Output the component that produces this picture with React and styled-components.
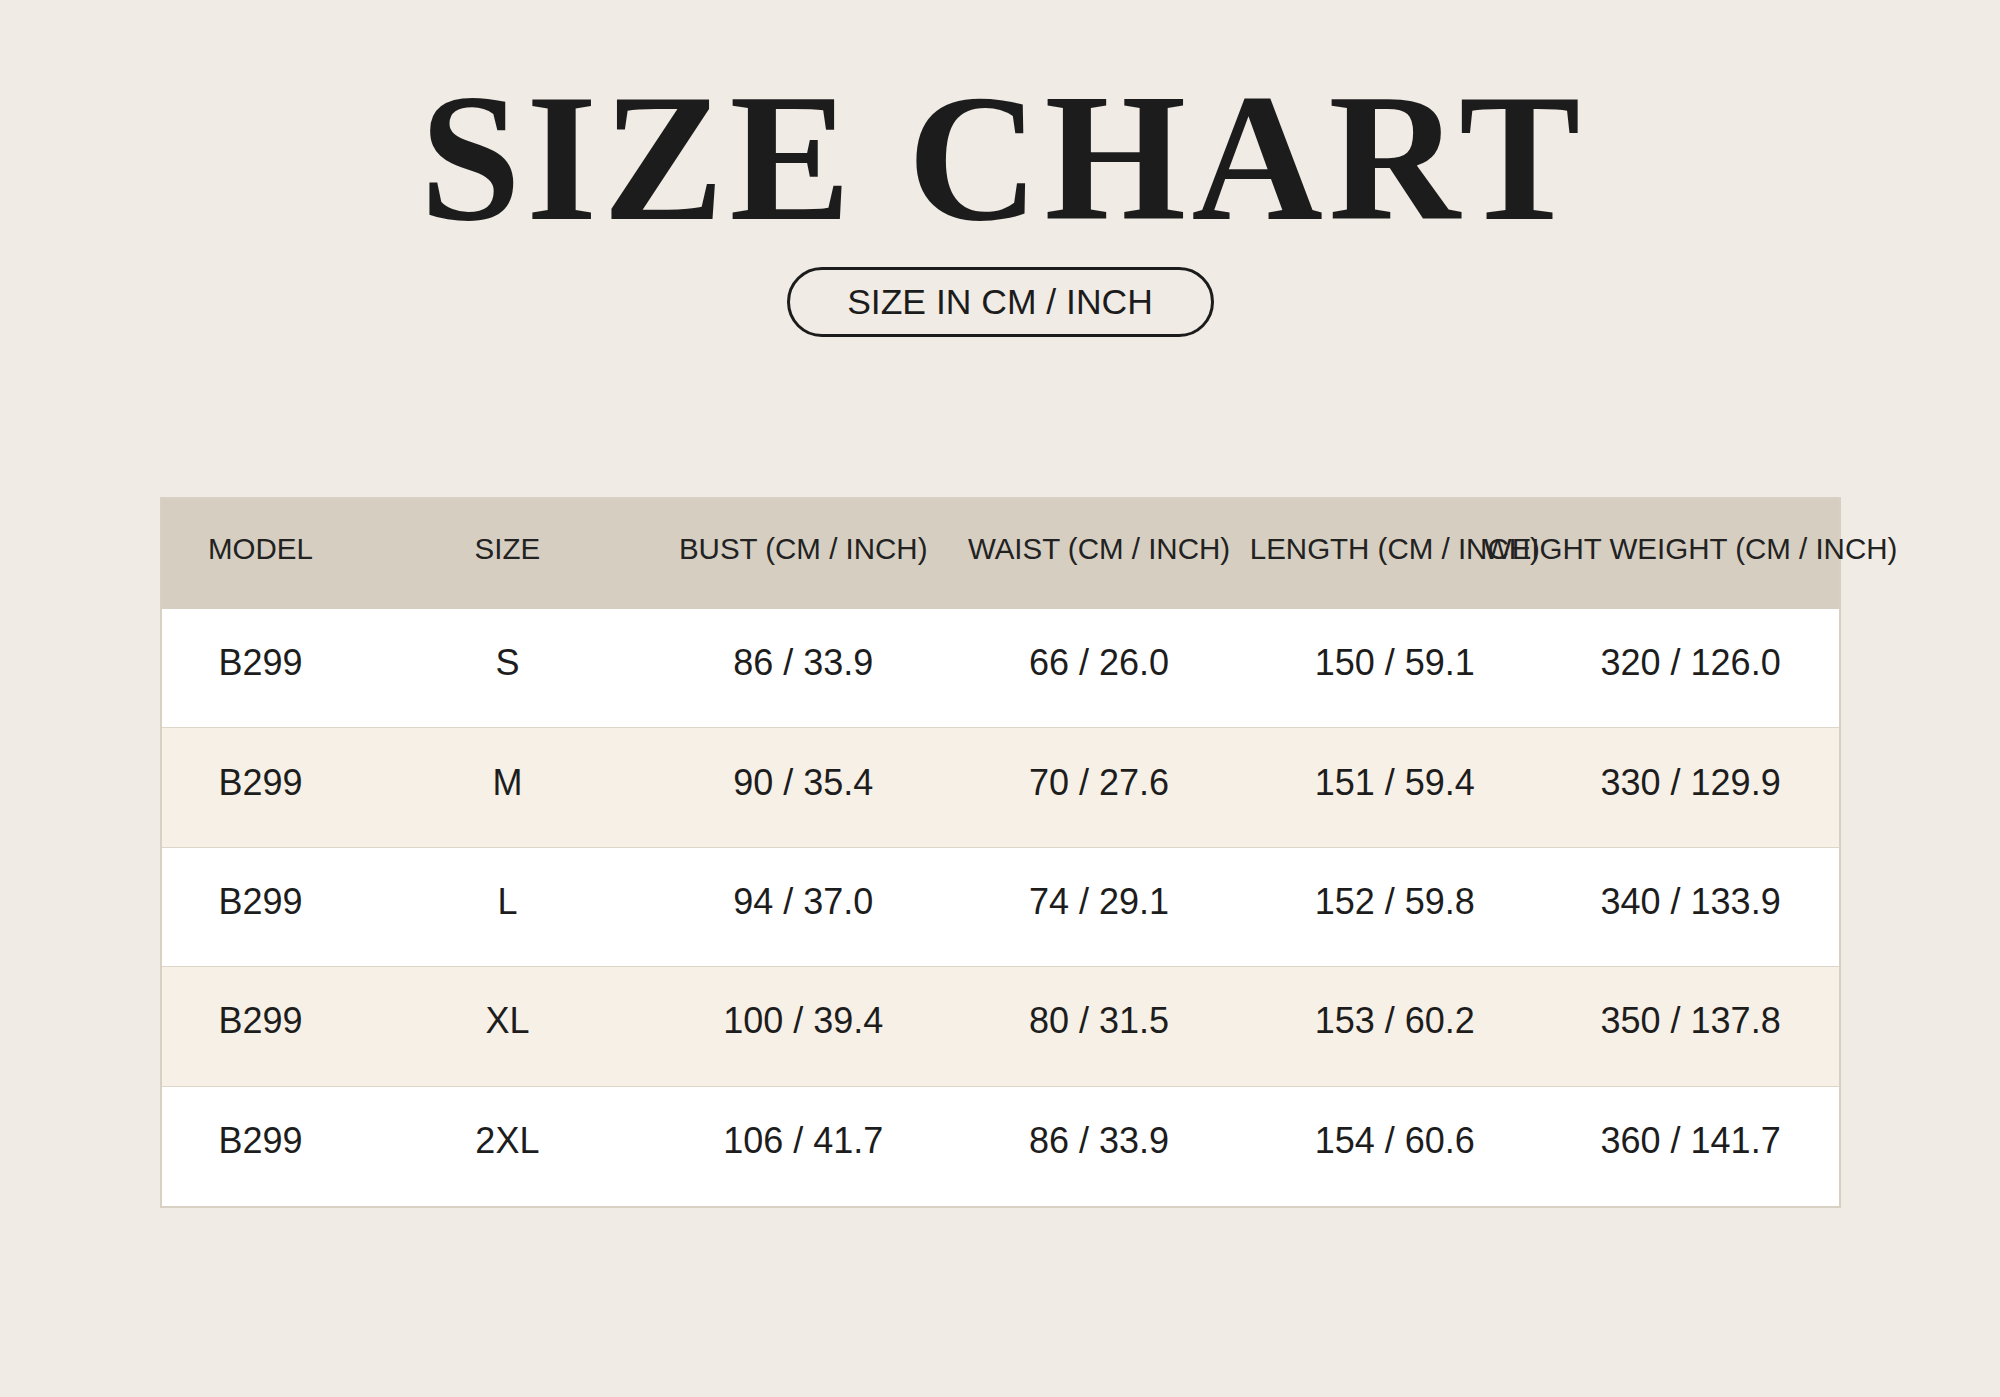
import React from 'react';
import styled, { createGlobalStyle } from 'styled-components';

const GlobalStyle = createGlobalStyle`
  html, body {
    margin: 0;
    padding: 0;
    background: #f0ebe4;
  }
  body {
    font-family: 'Liberation Sans', Arial, sans-serif;
    color: #1d1d1d;
  }
`;

const columns = [
  'MODEL',
  'SIZE',
  'BUST (CM / INCH)',
  'WAIST (CM / INCH)',
  'LENGTH (CM / INCH)',
  'WEIGHT WEIGHT (CM / INCH)',
];

const rows = [
  ['B299', 'S', '86 / 33.9', '66 / 26.0', '150 / 59.1', '320 / 126.0'],
  ['B299', 'M', '90 / 35.4', '70 / 27.6', '151 / 59.4', '330 / 129.9'],
  ['B299', 'L', '94 / 37.0', '74 / 29.1', '152 / 59.8', '340 / 133.9'],
  ['B299', 'XL', '100 / 39.4', '80 / 31.5', '153 / 60.2', '350 / 137.8'],
  ['B299', '2XL', '106 / 41.7', '86 / 33.9', '154 / 60.6', '360 / 141.7'],
];

const App = () => {
  return (
    <Page>
      <GlobalStyle />
      <Title>SIZE CHART</Title>
      <UnitPill>SIZE IN CM / INCH</UnitPill>
      <Table>
        <HeaderRow>
          {columns.map((c) => (
            <HeadCell key={c}>{c}</HeadCell>
          ))}
        </HeaderRow>
        {rows.map((r, i) => (
          <Row key={r[1]} $alt={i % 2 === 1} $last={i === rows.length - 1}>
            {r.map((v, j) => (
              <Cell key={j}>{v}</Cell>
            ))}
          </Row>
        ))}
      </Table>
    </Page>
  );
};

export default App;

// Styled Components

const Page = styled.div`
  width: 2000px;
  min-height: 1397px;
  box-sizing: border-box;
  padding-top: 58px;
  display: flex;
  flex-direction: column;
  align-items: center;
  background: #f0ebe4;
`;

const Title = styled.h1`
  margin: 0;
  font-family: 'Liberation Serif', 'Times New Roman', serif;
  font-weight: 700;
  font-size: 182px;
  line-height: 199px;
  height: 199px;
  letter-spacing: 5.5px;
  padding-left: 5.5px;
  color: #1c1c1c;
  white-space: nowrap;
`;

const UnitPill = styled.div`
  margin-top: 10px;
  width: 427px;
  height: 70px;
  box-sizing: border-box;
  border: 3px solid #1c1c1c;
  border-radius: 35px;
  display: flex;
  align-items: center;
  justify-content: center;
  font-size: 35.5px;
  color: #1c1c1c;
`;

const Table = styled.div`
  margin-top: 160px;
  width: 1681px;
  box-sizing: border-box;
  border: 2px solid #d8d0c3;
  background: #ffffff;
`;

const HeaderRow = styled.div`
  display: grid;
  grid-template-columns: 198px repeat(5, 1fr);
  height: 110px;
  background: #d6cec1;
  align-items: center;
  padding-bottom: 11px;
  box-sizing: border-box;
`;

const HeadCell = styled.div`
  font-size: 29.5px;
  color: #222;
  white-space: nowrap;
  display: flex;
  justify-content: center;
  min-width: 0;
`;

const Row = styled.div`
  display: grid;
  grid-template-columns: 198px repeat(5, 1fr);
  height: 119.4px;
  box-sizing: border-box;
  background: ${(p) => (p.$alt ? '#f7f0e6' : '#ffffff')};
  border-bottom: ${(p) => (p.$last ? 'none' : '1px solid #ddd5c8')};
  align-items: center;
  padding-bottom: 10px;
`;

const Cell = styled.div`
  font-size: 36px;
  text-align: center;
  white-space: nowrap;
  color: #1d1d1d;
`;
